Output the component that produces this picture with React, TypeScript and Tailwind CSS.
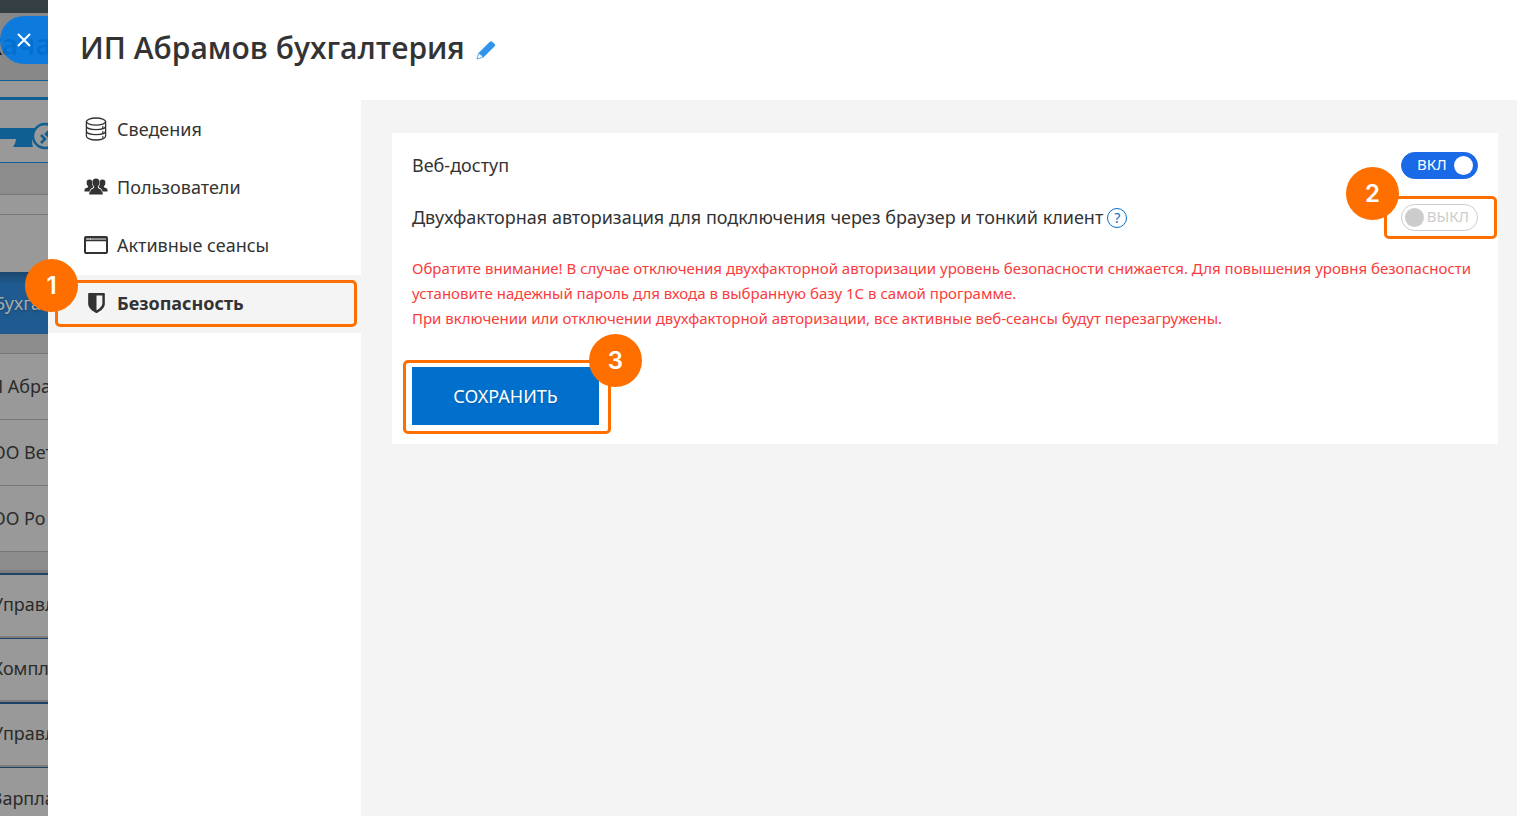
import { useState } from 'react'
import type { ReactNode } from 'react'

const menuItems = [
  { id: 'info', label: 'Сведения' },
  { id: 'users', label: 'Пользователи' },
  { id: 'sessions', label: 'Активные сеансы' },
  { id: 'security', label: 'Безопасность' },
]

const icons: Record<string, ReactNode> = {
  info: (
    <svg width="22" height="24" viewBox="0 0 22 24" fill="none" stroke="#333" strokeWidth="1.3">
      <ellipse cx="11" cy="4.6" rx="9.6" ry="3.6" />
      <path d="M1.4 4.6v14.6c0 2 4.3 3.8 9.6 3.8s9.6-1.8 9.6-3.8V4.6" />
      <path d="M1.4 9.2c0 2 4.3 3.4 9.6 3.4s9.6-1.4 9.6-3.4M1.4 14.2c0 2 4.3 3.400 9.600 3.400s9.600-1.400 9.600-3.400" />
      <path d="M17 10h1.500M17 15h1.500M17 20h1.500" />
    </svg>
  ),
  users: (
    <svg width="24" height="18" viewBox="0 0 24 18" fill="#333">
      <path d="M5.500 1.500c1.300 0 2.300.7 2.700 1.600-.5 1.900-.1 3.900 1 5.300-.2.500-.1.900.2 1.200-2 .8-3.500 1.600-3.900 3.900H.5c-.3-2.400.3-3 2.400-3.700 1.200-.4 1.500-.8 1.100-1.600C2.900 6.900 2.400 5.400 2.700 3.700c.2-1.400 1.300-2.200 2.800-2.200z" />
      <path d="M18.500 1.500c-1.300 0-2.300.7-2.700 1.600.5 1.900.1 3.900-1 5.300.2.500.1.900-.2 1.200 2 .8 3.500 1.600 3.900 3.900h5c.3-2.400-.3-3-2.400-3.700-1.200-.4-1.500-.8-1.100-1.600 1.100-1.300 1.600-2.800 1.300-4.500-.2-1.400-1.300-2.200-2.800-2.200z" />
      <path d="M12 .500c2.200 0 3.700 1.500 3.600 3.800 0 1.700-.7 3.200-1.700 4.200-.3 1.200.2 1.700 1.600 2.200 2.500.8 3.300 1.700 3.300 5.800H5.200c0-4.100.8-5 3.300-5.800 1.400-.5 1.900-1 1.600-2.200-1-1-1.700-2.500-1.700-4.200C8.300 2 9.800.5 12 .5z" />
      <path d="M5.700 14.500Q5.700 11.200 9.300 10M18.300 14.500Q18.300 11.200 14.700 10" fill="none" stroke="#fff" strokeWidth="0.600" />
    </svg>
  ),
  sessions: (
    <svg width="24" height="18" viewBox="0 0 24 18" fill="none" stroke="#333">
      <rect x="1" y="1" width="22" height="16" rx="1" strokeWidth="2" />
      <path d="M2 4.500h20" strokeWidth="1.500" />
      <path d="M2 2.900h20" strokeWidth="1.800" stroke="#888" />
      <path d="M3.500 2.900h1M6 2.900h1" strokeWidth="1" stroke="#fff" />
    </svg>
  ),
  security: (
    <svg width="17" height="20" viewBox="0 0 1280 1536" fill="#333">
      <path d="M1088 832V192H640v1137q119-63 213-137 235-184 235-360zm192-768v768q0 86-33.500 170.500t-83 150-118 127.500-126.500 103-121 77.500-89.500 49.500-42.500 20q-12 6-26 6t-26-6q-16-7-42.500-20t-89.500-49.500-121-77.500-126.500-103-118-127.500-83-150T0 832V64q0-26 19-45T64 0h1152q26 0 45 19t19 45z" />
    </svg>
  ),
}

function Marker({ n, className }: { n: number; className: string }) {
  return (
    <span
      className={`absolute z-20 flex size-[53px] items-center justify-center rounded-full bg-[#ff6f00] font-[Inter,sans-serif] text-2xl font-semibold text-white ${className}`}
    >
      {n}
    </span>
  )
}

function Frame({ className }: { className: string }) {
  return <span className={`pointer-events-none absolute z-10 rounded-[5px] border-3 border-[#ff6f00] ${className}`} />
}

function Toggle({ id, label, checked, onChange }: { id: string; label: string; checked: boolean; onChange: (v: boolean) => void }) {
  return (
    <label
      htmlFor={id}
      className={`flex h-[27px] w-[77px] cursor-pointer items-center justify-between rounded-full border text-[15px] ${
        checked ? 'border-[#1a6ae8] bg-[#1a6ae8] pr-1 pl-[15px] text-white' : 'flex-row-reverse border-[#ccc] bg-white pr-2 pl-[3px] text-[#ccc]'
      }`}
    >
      <input
        id={id}
        type="checkbox"
        role="switch"
        aria-label={label}
        className="sr-only"
        checked={checked}
        onChange={e => onChange(e.target.checked)}
      />
      <span className="pb-0.5">{checked ? 'ВКЛ' : 'ВЫКЛ'}</span>
      <span className={`size-[19px] rounded-full ${checked ? 'bg-white' : 'bg-[#ccc]'}`} />
    </label>
  )
}

function PageBehind() {
  return (
    <div className="relative w-12 shrink-0 bg-[#8c8c8c] text-lg whitespace-nowrap text-[#2b2b2b]">
      <div className="flex h-screen flex-col overflow-hidden">
        <div className="h-[13px] shrink-0 bg-[#353e43]" />
        <div className="flex h-[67px] shrink-0 items-center bg-[#888] pb-1">
          <span className="-ml-3.5 text-[28px] font-semibold text-[#1d1d1d]">кача</span>
        </div>
        <div className="h-[17px] shrink-0 border-t border-[#0f5f93] bg-[#999]" />
        <div className="flex h-[66px] shrink-0 items-center border-t-3 border-b border-[#0f5f93] bg-[#999]">
          <svg width="48" height="62" viewBox="0 0 48 62">
            <path d="M0 28h36v11h-4q0 5 1 8H13q3-4 3-8H0z" fill="#0f5f93" />
            <circle cx="45" cy="36" r="12" fill="#999" stroke="#0f5f93" strokeWidth="2.500" />
            <path d="M41 35l4 4-4 4M50 30l-4 4 4 4" fill="none" stroke="#0f5f93" strokeWidth="2.500" />
          </svg>
        </div>
        <div className="h-[31px] shrink-0" />
        <div className="h-5 shrink-0 border-t border-[#777] bg-[#999]" />
        <div className="h-[58px] shrink-0 border-t border-[#777] bg-[#999]" />
        <div className="flex h-[62px] shrink-0 items-center bg-linear-to-b from-[#1c466d] via-[#1f5b90] via-20% to-[#1f5b90] text-[#aaa]">
          <span className="-ml-1.5 text-shadow-md">Бухга</span>
        </div>
        <div className="h-[19px] shrink-0" />
        <div className="flex h-[66px] shrink-0 items-center border-t border-[#777] bg-[#999] pb-0.5">
          <span className="-ml-2.5">П Абра</span>
        </div>
        <div className="flex h-[66px] shrink-0 items-center border-t border-[#777] bg-[#999] pb-0.5">
          <span className="-ml-2">ОО Вет</span>
        </div>
        <div className="flex h-[67px] shrink-0 items-center border-y border-[#777] bg-[#999] pb-0.5">
          <span className="-ml-2">ОО Ро</span>
        </div>
        <div className="h-[21px] shrink-0 border-b-3 border-[#7c7c7c]" />
        <div className="flex h-[65px] shrink-0 items-center border-t-2 border-b-2 border-t-[#1c4266] border-b-[#7c7c7c] bg-[#999] pb-1">
          <span className="-ml-2">Управл</span>
        </div>
        <div className="flex h-[64px] shrink-0 items-center border-t border-b-2 border-t-[#1c4266] border-b-[#7c7c7c] bg-[#999] pb-1">
          <span className="-ml-2">Компл</span>
        </div>
        <div className="flex h-[65px] shrink-0 items-center border-t-2 border-b-2 border-t-[#1c4266] border-b-[#7c7c7c] bg-[#999] pb-1">
          <span className="-ml-2">Управл</span>
        </div>
        <div className="flex h-[64px] shrink-0 items-center border-t border-[#1c4266] bg-[#999] pb-1">
          <span className="-ml-2">Зарпла</span>
        </div>
      </div>
      <button
        type="button"
        aria-label="Закрыть"
        className="absolute inset-x-0 top-4 flex h-12 items-center justify-center rounded-l-full bg-[#007ae6]/90 text-white"
      >
        <svg width="14" height="14" viewBox="0 0 14 14" stroke="currentColor" strokeWidth="2">
          <path d="M1 1l12 12M13 1L1 13" />
        </svg>
      </button>
    </div>
  )
}

export default function App() {
  const [active, setActive] = useState('security')
  const [webAccess, setWebAccess] = useState(true)
  const [twoFactor, setTwoFactor] = useState(false)

  return (
    <div className="flex min-h-screen bg-white font-['Noto_Sans','Open_Sans',sans-serif] text-[#333]">
      <PageBehind />

      <div className="flex min-w-0 flex-1 flex-col">
        {/* Header */}
        <header className="flex h-[100px] items-center gap-[11px] pb-1 pl-8">
          <h1 className="font-['Open_Sans',sans-serif] text-3xl font-semibold">ИП Абрамов бухгалтерия</h1>
          <button type="button" aria-label="Переименовать" className="pt-1">
            <svg width="20" height="20" viewBox="0 0 20 20" fill="#2f95ec">
              <path d="M13.800 1.700Q15 .6 16.200 1.700L18.800 4.300Q19.600 5.300 18.600 6.300L7.400 17.400 2.600 12.900z" />
              <path d="M2.700 13.100L.900 19l6-1.700-.9-2.100-1.600-.5z" fill="#fff" stroke="#2f95ec" strokeWidth="0.800" />
            </svg>
          </button>
        </header>

        <div className="flex flex-1">
          {/* Menu */}
          <nav className="w-[313px] shrink-0 pt-px text-lg">
            {menuItems.map(item => (
              <div key={item.id} className={`relative ${active === item.id ? 'bg-[#f4f4f4] font-bold' : ''}`}>
                <button
                  type="button"
                  onClick={() => setActive(item.id)}
                  className="flex h-[58px] w-full cursor-pointer items-center gap-[9px] pb-0.5 pl-9 text-left"
                >
                  <span className="flex w-6 justify-center">{icons[item.id]}</span>
                  {item.label}
                </button>
                {item.id === 'security' && (
                  <>
                    <Frame className="top-[5px] right-1 bottom-1.5 left-[7px]" />
                    <Marker n={1} className="-top-4 -left-[23px]" />
                  </>
                )}
              </div>
            ))}
          </nav>

          {/* Content */}
          <main className="flex-1 bg-[#f4f4f4] pt-[33px] pr-[19px] pl-[31px]">
            <form className="bg-white px-5 py-[19px] text-lg" onSubmit={e => e.preventDefault()}>
              <div className="flex h-[27px] items-center justify-between">
                <span className="pb-0.5">Веб-доступ</span>
                <Toggle id="web-access" label="Веб-доступ" checked={webAccess} onChange={setWebAccess} />
              </div>
              <div className="mt-[25px] flex h-[27px] items-center justify-between">
                <span className="flex items-center gap-1">
                  <span className="pb-0.5">Двухфакторная авторизация для подключения через браузер и тонкий клиент</span>
                  <button
                    type="button"
                    aria-label="Справка"
                    className="flex size-5 items-center justify-center rounded-full border border-[#0070cc] text-sm text-[#0070cc]"
                  >
                    ?
                  </button>
                </span>
                <div className="relative">
                  <Toggle id="two-factor" label="Двухфакторная авторизация" checked={twoFactor} onChange={setTwoFactor} />
                  <Frame className="-inset-y-2 -right-[19px] -left-[17px]" />
                  <Marker n={2} className="-top-[37px] -left-[55px]" />
                </div>
              </div>
              <div className="-mr-3 mt-[25px] pb-px text-[15px] leading-[25px] text-[#f93c3c]">
                <p>
                  Обратите внимание! В случае отключения двухфакторной авторизации уровень безопасности снижается. Для
                  повышения уровня безопасности установите надежный пароль для входа в выбранную базу 1С в самой программе.
                </p>
                <p>При включении или отключении двухфакторной авторизации, все активные веб-сеансы будут перезагружены.</p>
              </div>
              <div className="relative mt-[35px] w-fit">
                <button
                  type="submit"
                  className="h-[58px] w-[187px] cursor-pointer bg-[#0070cc] pb-px text-lg text-white text-shadow-sm hover:bg-[#0063b5]"
                >
                  СОХРАНИТЬ
                </button>
                <Frame className="-top-[7px] -right-3 -bottom-[9px] -left-[9px]" />
                <Marker n={3} className="-top-[33px] left-[177px]" />
              </div>
            </form>
          </main>
        </div>
      </div>
    </div>
  )
}
